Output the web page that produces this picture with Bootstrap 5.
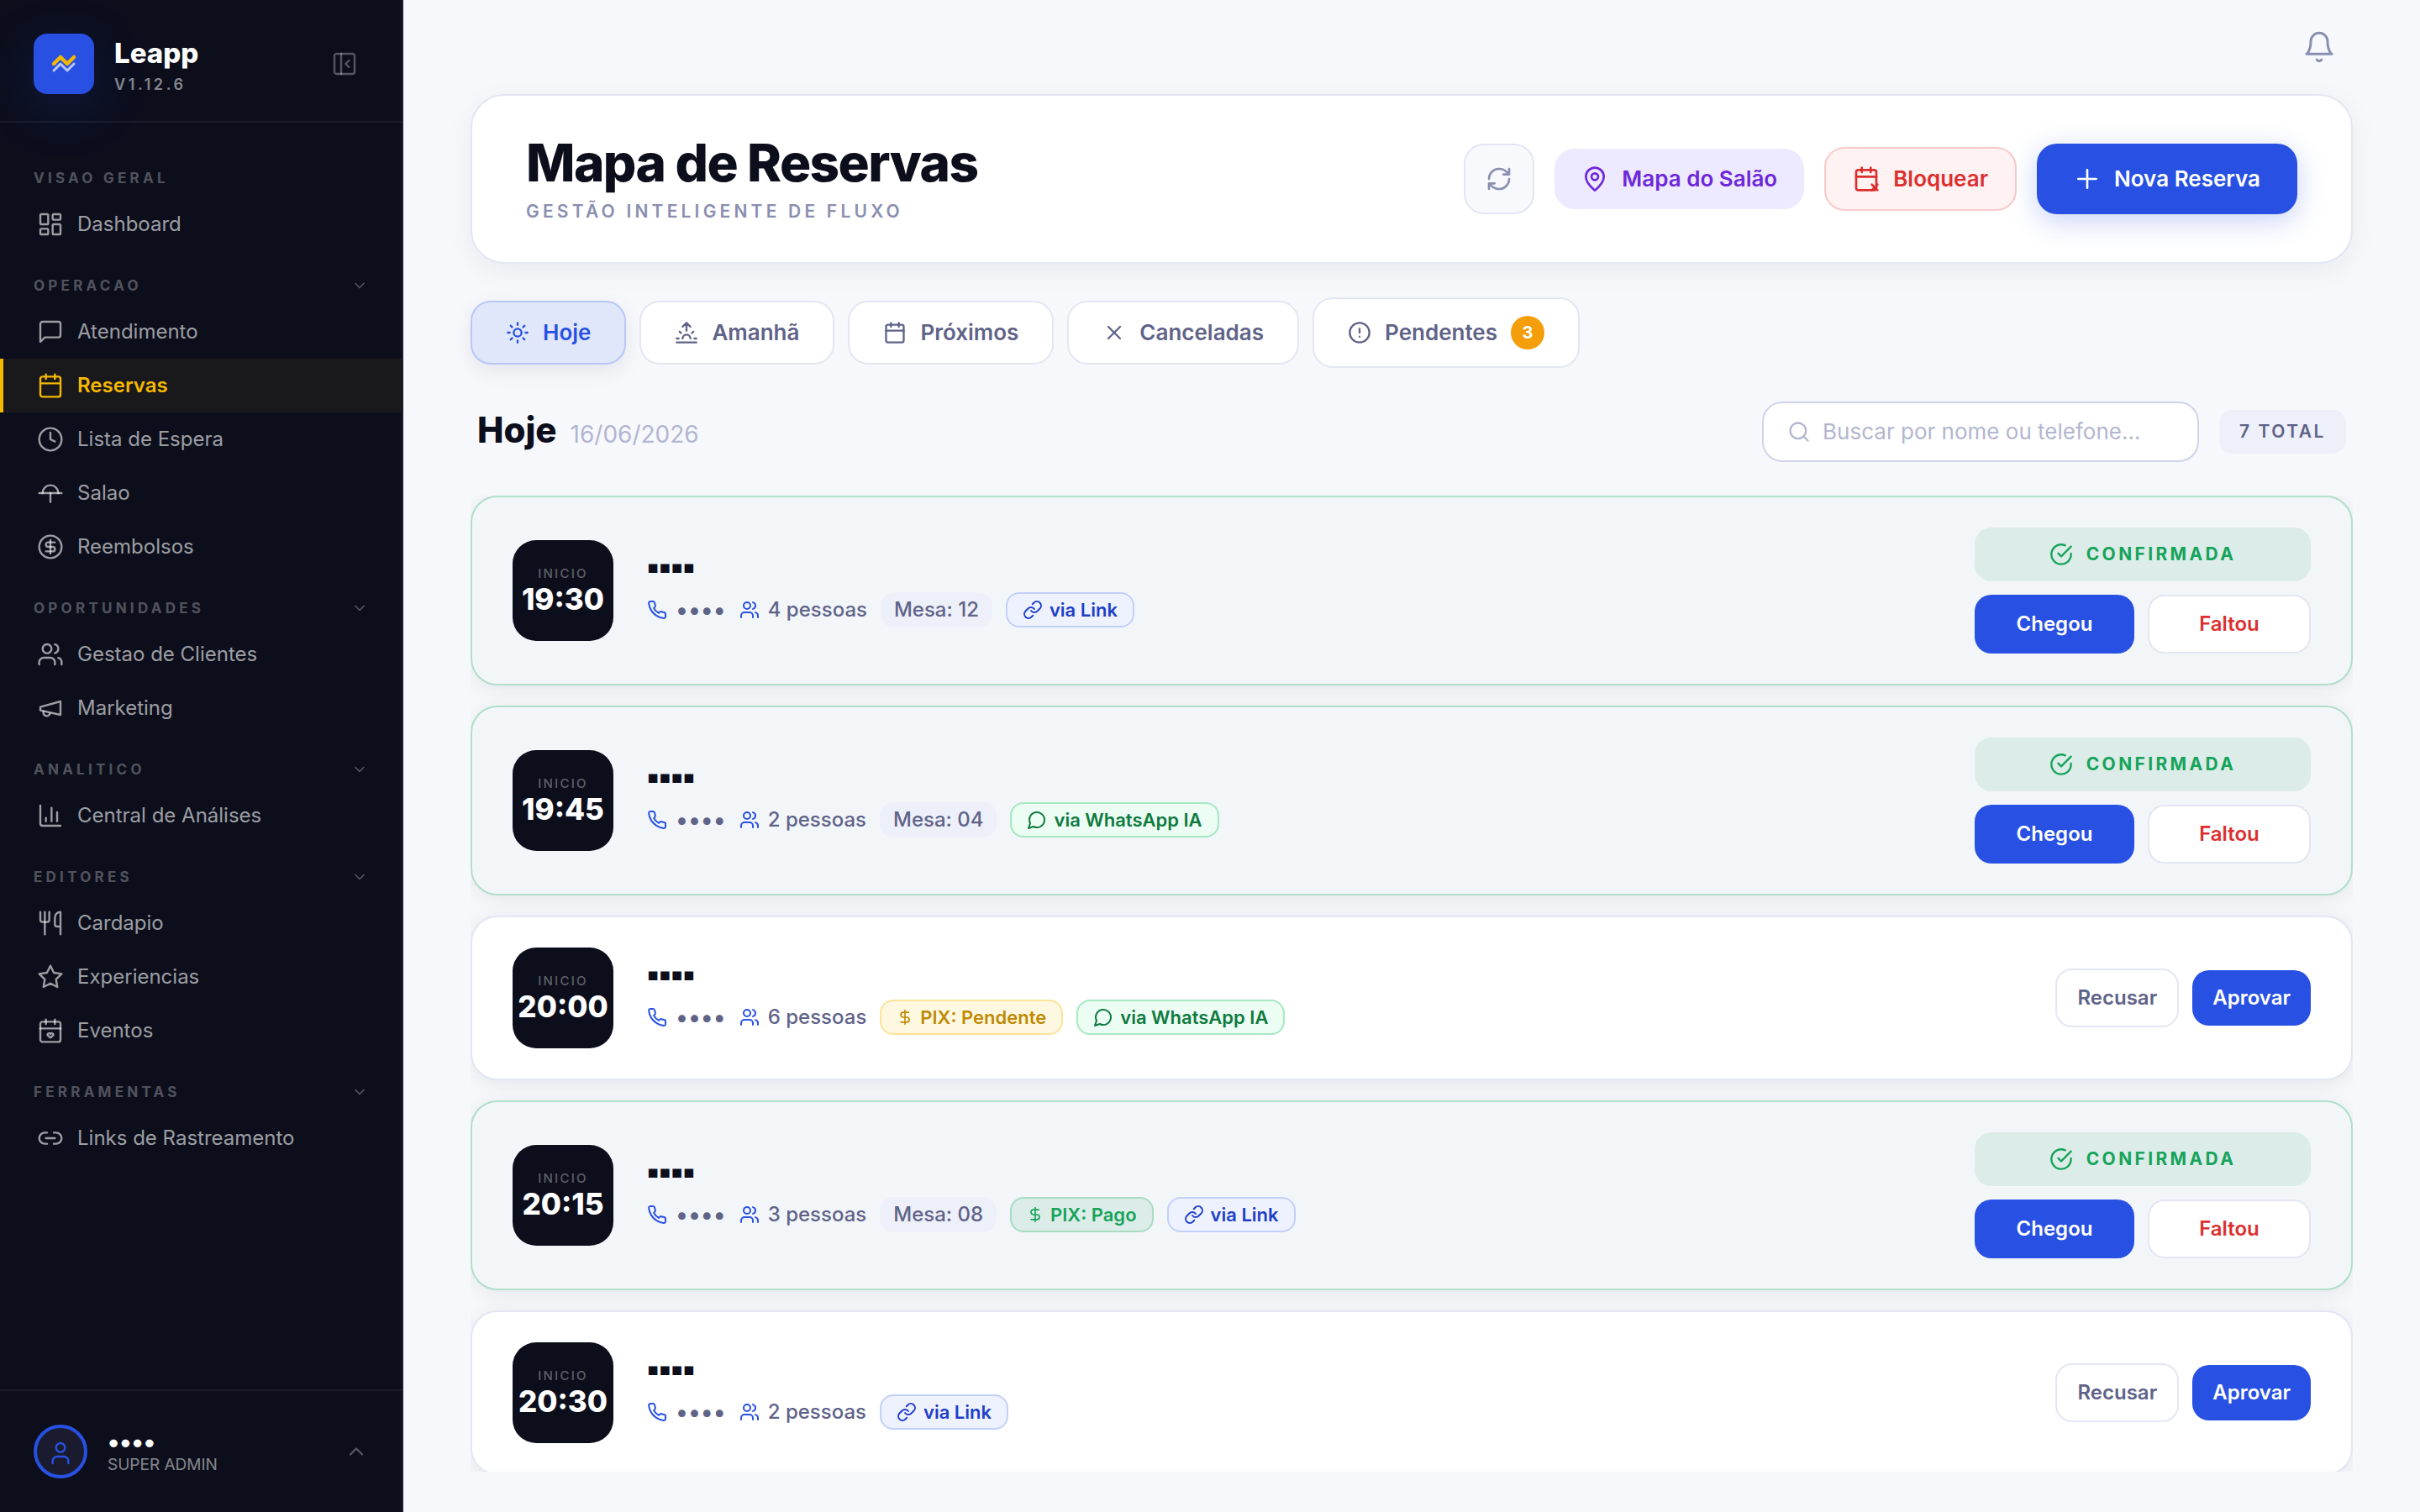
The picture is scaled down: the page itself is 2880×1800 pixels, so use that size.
<!DOCTYPE html>
<html lang="pt-BR">
<head>
<meta charset="utf-8">
<meta name="viewport" content="width=device-width, initial-scale=1">
<title>Leapp - Mapa de Reservas</title>
<link href="https://cdn.jsdelivr.net/npm/bootstrap@5.3.0/dist/css/bootstrap.min.css" rel="stylesheet">
<style>
:root{--brand:#2851e3;--ink:#0c0e1c;--line:#e4e6f3;--slate:#5f6388;--mute:#8a8fb0;--pale:#b2b6d0;--sun:#f5b800;--ok:#16a35a}
body{font-family:Inter,"Noto Sans",sans-serif;font-size:24px;line-height:32px;background:#f6f8fc;color:var(--ink)}
button,input{font-family:inherit}
a{text-decoration:none}
.ico{width:32px;height:32px;flex:none;fill:none;stroke:currentColor;stroke-width:2;stroke-linecap:round;stroke-linejoin:round}
.ico-xs{width:20px;height:20px}
.ico-sm{width:24px;height:24px}
.ico-md{width:28px;height:28px}
.ico-lg{width:40px;height:40px}
.thin{stroke-width:1.8}
/* sidebar */
.side{width:480px;flex:none;background:var(--ink);color:#fff;border-right:2px solid #1b1d2b}
.side-head{padding:40px 52px 32px 40px;border-bottom:2px solid #1b1d2b}
.logo{width:72px;height:72px;border-radius:16px;background:var(--brand);box-shadow:0 16px 64px rgba(40,81,227,.2)}
.brand-name{font-size:33px;font-weight:800;line-height:44px}
.version{font-size:18px;line-height:20px;font-weight:600;letter-spacing:.2em;color:rgba(255,255,255,.5);margin-top:6px}
.ghost{border:0;background:none;padding:0;color:rgba(255,255,255,.3)}
.ghost.bell{color:var(--mute)}
.side-nav{padding-top:25px}
.group-label{padding:28px 40px 10px;font-size:17px;line-height:26px;font-weight:700;letter-spacing:.25em;color:rgba(255,255,255,.3);width:100%;border:0;background:none;text-align:left}
.side-link{height:64px;padding-left:40px;border-left:4px solid transparent;color:rgba(255,255,255,.6);gap:16px}
.side-link.on{background:#19191c;border-color:var(--sun);color:var(--sun);font-weight:600}
.side-foot{padding:40px;border-top:2px solid #1b1d2b}
.face{width:64px;height:64px;border-radius:50%;border:4px solid var(--brand);background:#1a1b2e;color:var(--brand);padding-top:4px}
.user-name{font-size:30px;font-weight:700}
.role{font-size:19px;line-height:24px;color:rgba(255,255,255,.5)}
/* main */
.page{padding:0 80px 48px;min-width:0}
.topbar{height:112px;padding-right:20px}
.hero{padding:48px 64px;border:2px solid var(--line);border-radius:40px;background:#fff;box-shadow:0 8px 32px rgba(12,14,28,.06)}
.hero h1{font-size:62px;line-height:64px;font-weight:800;letter-spacing:-.025em;margin:0}
.kicker{font-size:21px;line-height:24px;font-weight:600;letter-spacing:.2em;color:var(--mute);margin-top:14px}
.act{display:inline-flex;align-items:center;gap:16px;border:0;border-radius:24px;font-size:26px;line-height:32px;font-weight:600;padding:20px 32px}
.act-map{background:#ede9fe;color:#6d28d9}
.act-block{background:#fef2f2;color:#dc2f2f;border:2px solid #f8caca}
.act-new{background:var(--brand);color:#fff;padding:26px 44px;box-shadow:0 8px 32px rgba(40,81,227,.25)}
.act-sync{background:#f7f9fd;border:2px solid var(--line);color:var(--mute);padding:24px}
.act-sync .ico{width:32px}
.tabs-row{gap:16px;margin-top:40px}
.pill{display:inline-flex;align-items:center;gap:16px;padding:20px 40px;border:2px solid var(--line);border-radius:24px;background:#fff;color:var(--slate);font-weight:600;font-size:26px;line-height:32px}
.pill.on{background:#e1e7fa;border-color:#b9c7f7;color:var(--brand);box-shadow:0 8px 24px rgba(12,14,28,.08)}
.count{width:40px;height:40px;border-radius:50%;background:#f59e0b;color:#fff;font-size:20px;font-weight:700}
.list-head{padding:0 8px;margin:40px 0}
.list-head h2{font-size:42px;line-height:48px;font-weight:800;margin:0}
.date{font-size:28px;color:var(--pale)}
.find{width:520px;height:72px;border:2px solid #d0d4ea;border-radius:24px;background:#fff;padding:0 28px;gap:14px;color:var(--pale)}
.find input{border:0;outline:0;background:none;font-size:26px;line-height:32px;padding:0;width:100%;color:var(--ink)}
.find input::placeholder{color:var(--pale);opacity:1}
.total{background:#eef0f9;border-radius:16px;padding:10px 24px;font-size:21px;line-height:32px;font-weight:600;letter-spacing:.12em;color:var(--slate)}
.bookings{overflow:hidden;gap:24px;min-height:0;flex:1 1 0}
.booking{flex:none;padding:36px 48px;border:2px solid var(--line);border-radius:32px;background:#fff;box-shadow:0 4px 24px rgba(12,14,28,.08)}
.booking.ok{background:#f2f6f9;border-color:#b0dfcb}
.slot{width:120px;height:120px;border-radius:28px;background:var(--ink);color:#fff;flex:none}
.slot small{font-size:15px;line-height:20px;font-weight:500;letter-spacing:.15em;color:rgba(255,255,255,.35)}
.slot b{font-size:35px;line-height:40px;font-weight:800}
.info{padding-left:40px}
.who{font-family:"DejaVu Sans",sans-serif;font-size:21px;line-height:32px;margin-bottom:14px}
.meta{gap:16px;color:var(--slate);font-weight:500}
.bit{display:inline-flex;align-items:center;gap:10px}
.bit .ico{color:var(--brand)}
.dots{font-size:28px}
.chip{display:inline-flex;align-items:center;gap:8px;height:42px;padding:0 18px;border:2px solid;border-radius:16px;font-size:22px;font-weight:600}
.chip-table{background:#eef0f9;border-color:#eef0f9;padding:0 14px;font-size:24px;font-weight:500}
.chip-link{background:#eef2ff;border-color:#c3cffb;color:#1f3fc8}
.chip-wa{background:#ecfdf3;border-color:#a5e8c2;color:#0f7a40}
.chip-wait{background:#fff8e1;border-color:#fde29a;color:#bf8a06}
.chip-paid{background:#dcece8;border-color:#a9dcc4;color:var(--ok)}
.status{width:400px;height:64px;border-radius:20px;background:#dcece8;color:var(--ok);gap:16px;font-size:21px;font-weight:700;letter-spacing:.16em}
.go{border:0;border-radius:20px;background:var(--brand);color:#fff;font-size:24px;line-height:30px;font-weight:600;padding:18px 24px}
.no{border:2px solid var(--line);border-radius:20px;background:#fff;color:var(--slate);font-size:24px;line-height:30px;font-weight:600;padding:18px 24px}
.no.miss{color:#dc2f2f}
.half{flex:1 1 0}
</style>
</head>
<body>
<svg class="d-none" aria-hidden="true">
<symbol id="i-dash" viewBox="0 0 24 24"><rect x="3" y="3" width="7" height="9" rx="1"/><rect x="14" y="3" width="7" height="5" rx="1"/><rect x="14" y="12" width="7" height="9" rx="1"/><rect x="3" y="16" width="7" height="5" rx="1"/></symbol>
<symbol id="i-msg" viewBox="0 0 24 24"><path d="M21 15a2 2 0 0 1-2 2H7l-4 4V5a2 2 0 0 1 2-2h14a2 2 0 0 1 2 2z"/></symbol>
<symbol id="i-cal" viewBox="0 0 24 24"><path d="M8 2v4M16 2v4M3 10h18"/><rect x="3" y="4" width="18" height="18" rx="2"/></symbol>
<symbol id="i-clock" viewBox="0 0 24 24"><circle cx="12" cy="12" r="10"/><path d="M12 6v6l4 2"/></symbol>
<symbol id="i-room" viewBox="0 0 24 24"><path d="M5 12a7 7 0 0 1 14 0"/><path d="M2 12h20"/><path d="M12 12v8"/></symbol>
<symbol id="i-coin" viewBox="0 0 24 24"><circle cx="12" cy="12" r="10"/><path d="M16 8h-6a2 2 0 1 0 0 4h4a2 2 0 1 1 0 4H8"/><path d="M12 18V6"/></symbol>
<symbol id="i-users" viewBox="0 0 24 24"><path d="M16 21v-2a4 4 0 0 0-4-4H6a4 4 0 0 0-4 4v2"/><circle cx="9" cy="7" r="4"/><path d="M22 21v-2a4 4 0 0 0-3-3.870M16 3.130a4 4 0 0 1 0 7.750"/></symbol>
<symbol id="i-mega" viewBox="0 0 24 24"><path d="m3 11 18-5v12L3 14v-3z"/><path d="M11.600 16.800a3 3 0 1 1-5.800-1.600"/></symbol>
<symbol id="i-chart" viewBox="0 0 24 24"><path d="M3 3v16a2 2 0 0 0 2 2h16M18 17V9M13 17V5M8 17v-3"/></symbol>
<symbol id="i-fork" viewBox="0 0 24 24"><path d="M3 2v7c0 1.100.9 2 2 2h4a2 2 0 0 0 2-2V2"/><path d="M7 2v20"/><path d="M21 15V2a5 5 0 0 0-5 5v6c0 1.100.9 2 2 2h3Zm0 0v7"/></symbol>
<symbol id="i-star" viewBox="0 0 24 24"><path d="m12 2 3.090 6.260L22 9.270l-5 4.870 1.180 6.880L12 17.770l-6.180 3.250L7 14.140 2 9.270l6.910-1.010z"/></symbol>
<symbol id="i-event" viewBox="0 0 24 24"><path d="M8 2v4M16 2v4"/><path d="M3 10h18"/><rect x="3" y="4" width="18" height="18" rx="2"/><path d="M12 18.200l-2.400-2a1.300 1.300 0 0 1 2.400-1.200 1.300 1.300 0 0 1 2.400 1.200z"/></symbol>
<symbol id="i-chain" viewBox="0 0 24 24"><path d="M9 17H7A5 5 0 0 1 7 7h2M15 7h2a5 5 0 1 1 0 10h-2M8 12h8"/></symbol>
<symbol id="i-panel" viewBox="0 0 24 24"><rect x="3" y="3" width="18" height="18" rx="2"/><path d="M9 3v18"/><path d="m16 15-3-3 3-3"/></symbol>
<symbol id="i-down" viewBox="0 0 24 24"><path d="m6 9 6 6 6-6"/></symbol>
<symbol id="i-up" viewBox="0 0 24 24"><path d="m18 15-6-6-6 6"/></symbol>
<symbol id="i-user" viewBox="0 0 24 24"><path d="M19 21v-2a4 4 0 0 0-4-4H9a4 4 0 0 0-4 4v2"/><circle cx="12" cy="7" r="4"/></symbol>
<symbol id="i-bell" viewBox="0 0 24 24"><path d="M6 8a6 6 0 0 1 12 0c0 7 3 9 3 9H3s3-2 3-9M10.300 21a1.940 1.940 0 0 0 3.400 0"/></symbol>
<symbol id="i-sync" viewBox="0 0 24 24"><path d="M3 12a9 9 0 0 1 9-9 9.750 9.750 0 0 1 6.740 2.740L21 8M21 3v5h-5M21 12a9 9 0 0 1-9 9 9.750 9.750 0 0 1-6.740-2.740L3 16M8 16H3v5"/></symbol>
<symbol id="i-pin" viewBox="0 0 24 24"><path d="M20 10c0 5-5.500 10.200-7.400 11.800a1 1 0 0 1-1.200 0C9.500 20.200 4 15 4 10a8 8 0 0 1 16 0"/><circle cx="12" cy="10" r="3"/></symbol>
<symbol id="i-calx" viewBox="0 0 24 24"><path d="M8 2v4M16 2v4M3 10h18"/><rect x="3" y="4" width="18" height="18" rx="2"/><path d="m17 17 5 5M22 17l-5 5"/></symbol>
<symbol id="i-plus" viewBox="0 0 24 24"><path d="M4 12h16M12 4v16"/></symbol>
<symbol id="i-sun" viewBox="0 0 24 24"><circle cx="12" cy="12" r="4"/><path d="M12 2v2M12 20v2M4.930 4.930l1.410 1.410M17.660 17.660l1.410 1.410M2 12h2M20 12h2M6.340 17.660l-1.410 1.410M19.070 4.930l-1.410 1.410"/></symbol>
<symbol id="i-rise" viewBox="0 0 24 24"><path d="M12 2v8M4.930 10.930l1.410 1.410M2 18h2M20 18h2M19.070 10.930l-1.410 1.410M22 22H2M8 6l4-4 4 4M16 18a4 4 0 0 0-8 0"/></symbol>
<symbol id="i-x" viewBox="0 0 24 24"><path d="M18 6 6 18M6 6l12 12"/></symbol>
<symbol id="i-alert" viewBox="0 0 24 24"><circle cx="12" cy="12" r="10"/><path d="M12 8v4M12 16h.010"/></symbol>
<symbol id="i-find" viewBox="0 0 24 24"><circle cx="11" cy="11" r="8"/><path d="m21 21-4.300-4.300"/></symbol>
<symbol id="i-phone" viewBox="0 0 24 24"><path d="M22 16.920v3a2 2 0 0 1-2.180 2 19.790 19.790 0 0 1-8.630-3.070 19.500 19.500 0 0 1-6-6 19.790 19.790 0 0 1-3.070-8.670A2 2 0 0 1 4.110 2h3a2 2 0 0 1 2 1.720 12.840 12.840 0 0 0 .7 2.810 2 2 0 0 1-.45 2.110L8.090 9.910a16 16 0 0 0 6 6l1.270-1.270a2 2 0 0 1 2.110-.45 12.840 12.840 0 0 0 2.810.7A2 2 0 0 1 22 16.920z"/></symbol>
<symbol id="i-link" viewBox="0 0 24 24"><path d="M10 13a5 5 0 0 0 7.540.54l3-3a5 5 0 0 0-7.070-7.070l-1.720 1.710"/><path d="M14 11a5 5 0 0 0-7.540-.54l-3 3a5 5 0 0 0 7.070 7.070l1.710-1.710"/></symbol>
<symbol id="i-wa" viewBox="0 0 24 24"><path d="M7.900 20A9 9 0 1 0 4 16.100L2 22Z"/></symbol>
<symbol id="i-cash" viewBox="0 0 24 24"><path d="M12 2v20M17 5H9.500a3.500 3.500 0 0 0 0 7h5a3.500 3.500 0 0 1 0 7H6"/></symbol>
<symbol id="i-check" viewBox="0 0 24 24"><path d="M22 11.080V12a10 10 0 1 1-5.930-9.140"/><path d="m9 11 3 3L22 4"/></symbol>
</svg>

<div class="d-flex vh-100 overflow-hidden">
<aside class="side d-flex flex-column">
  <div class="side-head d-flex align-items-center">
    <div class="logo d-flex align-items-center justify-content-center flex-shrink-0">
      <svg width="32" height="24" viewBox="0 0 32 24" fill="none" stroke-linecap="round" stroke-linejoin="round"><path d="M4 20l8-8 8 8 8-8" stroke="#b9c6f8" stroke-width="3"/><path d="M4 12l8-8 8 8 8-8" stroke="#f5b800" stroke-width="4.500"/></svg>
    </div>
    <div class="ms-4 flex-grow-1">
      <div class="brand-name">Leapp</div>
      <div class="version">V1.12.6</div>
    </div>
    <button class="ghost d-flex" type="button" aria-label="Recolher menu"><svg class="ico thin"><use href="#i-panel"/></svg></button>
  </div>
  <nav class="side-nav flex-grow-1">
    <div class="group-label">VISAO GERAL</div>
    <a class="side-link d-flex align-items-center" href="#"><svg class="ico thin"><use href="#i-dash"/></svg>Dashboard</a>
    <button class="group-label d-flex align-items-center justify-content-between" type="button">OPERACAO<svg class="ico ico-xs"><use href="#i-down"/></svg></button>
    <a class="side-link d-flex align-items-center" href="#"><svg class="ico thin"><use href="#i-msg"/></svg>Atendimento</a>
    <a class="side-link on d-flex align-items-center" href="#"><svg class="ico thin"><use href="#i-cal"/></svg>Reservas</a>
    <a class="side-link d-flex align-items-center" href="#"><svg class="ico thin"><use href="#i-clock"/></svg>Lista de Espera</a>
    <a class="side-link d-flex align-items-center" href="#"><svg class="ico thin"><use href="#i-room"/></svg>Salao</a>
    <a class="side-link d-flex align-items-center" href="#"><svg class="ico thin"><use href="#i-coin"/></svg>Reembolsos</a>
    <button class="group-label d-flex align-items-center justify-content-between" type="button">OPORTUNIDADES<svg class="ico ico-xs"><use href="#i-down"/></svg></button>
    <a class="side-link d-flex align-items-center" href="#"><svg class="ico thin"><use href="#i-users"/></svg>Gestao de Clientes</a>
    <a class="side-link d-flex align-items-center" href="#"><svg class="ico thin"><use href="#i-mega"/></svg>Marketing</a>
    <button class="group-label d-flex align-items-center justify-content-between" type="button">ANALITICO<svg class="ico ico-xs"><use href="#i-down"/></svg></button>
    <a class="side-link d-flex align-items-center" href="#"><svg class="ico thin"><use href="#i-chart"/></svg>Central de Análises</a>
    <button class="group-label d-flex align-items-center justify-content-between" type="button">EDITORES<svg class="ico ico-xs"><use href="#i-down"/></svg></button>
    <a class="side-link d-flex align-items-center" href="#"><svg class="ico thin"><use href="#i-fork"/></svg>Cardapio</a>
    <a class="side-link d-flex align-items-center" href="#"><svg class="ico thin"><use href="#i-star"/></svg>Experiencias</a>
    <a class="side-link d-flex align-items-center" href="#"><svg class="ico thin"><use href="#i-event"/></svg>Eventos</a>
    <button class="group-label d-flex align-items-center justify-content-between" type="button">FERRAMENTAS<svg class="ico ico-xs"><use href="#i-down"/></svg></button>
    <a class="side-link d-flex align-items-center" href="#"><svg class="ico thin"><use href="#i-chain"/></svg>Links de Rastreamento</a>
  </nav>
  <div class="side-foot d-flex align-items-center">
    <div class="face d-flex align-items-center justify-content-center flex-shrink-0"><svg class="ico thin"><use href="#i-user"/></svg></div>
    <div class="ms-4 flex-grow-1">
      <div class="user-name">••••</div>
      <div class="role">SUPER ADMIN</div>
    </div>
    <button class="ghost d-flex" type="button" aria-label="Abrir conta"><svg class="ico ico-md"><use href="#i-up"/></svg></button>
  </div>
</aside>

<main class="page d-flex flex-column flex-grow-1">
  <div class="topbar d-flex align-items-center justify-content-end"><button class="ghost bell d-flex" type="button" aria-label="Notificações"><svg class="ico ico-lg thin"><use href="#i-bell"/></svg></button></div>
  <header class="hero d-flex align-items-center justify-content-between">
    <div>
      <h1>Mapa de Reservas</h1>
      <div class="kicker">GESTÃO INTELIGENTE DE FLUXO</div>
    </div>
    <div class="d-flex align-items-center gap-4">
      <button class="act act-sync" type="button" aria-label="Atualizar"><svg class="ico"><use href="#i-sync"/></svg></button>
      <button class="act act-map" type="button"><svg class="ico"><use href="#i-pin"/></svg>Mapa do Salão</button>
      <button class="act act-block" type="button"><svg class="ico"><use href="#i-calx"/></svg>Bloquear</button>
      <button class="act act-new" type="button"><svg class="ico"><use href="#i-plus"/></svg>Nova Reserva</button>
    </div>
  </header>
  <div class="tabs-row d-flex align-items-center">
    <button class="pill on" type="button"><svg class="ico ico-md"><use href="#i-sun"/></svg>Hoje</button>
    <button class="pill" type="button"><svg class="ico ico-md"><use href="#i-rise"/></svg>Amanhã</button>
    <button class="pill" type="button"><svg class="ico ico-md"><use href="#i-cal"/></svg>Próximos</button>
    <button class="pill" type="button"><svg class="ico ico-md"><use href="#i-x"/></svg>Canceladas</button>
    <button class="pill" type="button"><svg class="ico ico-md"><use href="#i-alert"/></svg>Pendentes<span class="count d-flex align-items-center justify-content-center">3</span></button>
  </div>
  <div class="list-head d-flex align-items-center justify-content-between">
    <div class="d-flex align-items-baseline gap-3 pb-1"><h2>Hoje</h2><span class="date">16/06/2026</span></div>
    <div class="d-flex align-items-center gap-4">
      <label class="find d-flex align-items-center"><svg class="ico ico-md"><use href="#i-find"/></svg><input type="text" placeholder="Buscar por nome ou telefone..." aria-label="Buscar por nome ou telefone"></label>
      <span class="total">7 TOTAL</span>
    </div>
  </div>
  <section class="bookings d-flex flex-column">
    <article class="booking ok d-flex align-items-center">
      <div class="slot d-flex flex-column align-items-center justify-content-center"><small>INICIO</small><b>19:30</b></div>
      <div class="info flex-grow-1">
        <div class="who">▪▪▪▪</div>
        <div class="meta d-flex align-items-center"><span class="bit"><svg class="ico ico-sm"><use href="#i-phone"/></svg><span class="dots">••••</span></span><span class="bit"><svg class="ico ico-sm"><use href="#i-users"/></svg>4 pessoas</span><span class="chip chip-table">Mesa: 12</span><span class="chip chip-link"><svg class="ico ico-sm"><use href="#i-link"/></svg>via Link</span></div>
      </div>
      <div class="d-flex flex-column gap-3">
        <div class="status d-flex align-items-center justify-content-center"><svg class="ico ico-md"><use href="#i-check"/></svg>CONFIRMADA</div>
        <div class="d-flex gap-3"><button class="go half" type="button">Chegou</button><button class="no miss half" type="button">Faltou</button></div>
      </div>
    </article>
    <article class="booking ok d-flex align-items-center">
      <div class="slot d-flex flex-column align-items-center justify-content-center"><small>INICIO</small><b>19:45</b></div>
      <div class="info flex-grow-1">
        <div class="who">▪▪▪▪</div>
        <div class="meta d-flex align-items-center"><span class="bit"><svg class="ico ico-sm"><use href="#i-phone"/></svg><span class="dots">••••</span></span><span class="bit"><svg class="ico ico-sm"><use href="#i-users"/></svg>2 pessoas</span><span class="chip chip-table">Mesa: 04</span><span class="chip chip-wa"><svg class="ico ico-sm"><use href="#i-wa"/></svg>via WhatsApp IA</span></div>
      </div>
      <div class="d-flex flex-column gap-3">
        <div class="status d-flex align-items-center justify-content-center"><svg class="ico ico-md"><use href="#i-check"/></svg>CONFIRMADA</div>
        <div class="d-flex gap-3"><button class="go half" type="button">Chegou</button><button class="no miss half" type="button">Faltou</button></div>
      </div>
    </article>
    <article class="booking d-flex align-items-center">
      <div class="slot d-flex flex-column align-items-center justify-content-center"><small>INICIO</small><b>20:00</b></div>
      <div class="info flex-grow-1">
        <div class="who">▪▪▪▪</div>
        <div class="meta d-flex align-items-center"><span class="bit"><svg class="ico ico-sm"><use href="#i-phone"/></svg><span class="dots">••••</span></span><span class="bit"><svg class="ico ico-sm"><use href="#i-users"/></svg>6 pessoas</span><span class="chip chip-wait"><svg class="ico ico-xs"><use href="#i-cash"/></svg>PIX: Pendente</span><span class="chip chip-wa"><svg class="ico ico-sm"><use href="#i-wa"/></svg>via WhatsApp IA</span></div>
      </div>
      <div class="d-flex align-items-center gap-3"><button class="no" type="button">Recusar</button><button class="go" type="button">Aprovar</button></div>
    </article>
    <article class="booking ok d-flex align-items-center">
      <div class="slot d-flex flex-column align-items-center justify-content-center"><small>INICIO</small><b>20:15</b></div>
      <div class="info flex-grow-1">
        <div class="who">▪▪▪▪</div>
        <div class="meta d-flex align-items-center"><span class="bit"><svg class="ico ico-sm"><use href="#i-phone"/></svg><span class="dots">••••</span></span><span class="bit"><svg class="ico ico-sm"><use href="#i-users"/></svg>3 pessoas</span><span class="chip chip-table">Mesa: 08</span><span class="chip chip-paid"><svg class="ico ico-xs"><use href="#i-cash"/></svg>PIX: Pago</span><span class="chip chip-link"><svg class="ico ico-sm"><use href="#i-link"/></svg>via Link</span></div>
      </div>
      <div class="d-flex flex-column gap-3">
        <div class="status d-flex align-items-center justify-content-center"><svg class="ico ico-md"><use href="#i-check"/></svg>CONFIRMADA</div>
        <div class="d-flex gap-3"><button class="go half" type="button">Chegou</button><button class="no miss half" type="button">Faltou</button></div>
      </div>
    </article>
    <article class="booking d-flex align-items-center">
      <div class="slot d-flex flex-column align-items-center justify-content-center"><small>INICIO</small><b>20:30</b></div>
      <div class="info flex-grow-1">
        <div class="who">▪▪▪▪</div>
        <div class="meta d-flex align-items-center"><span class="bit"><svg class="ico ico-sm"><use href="#i-phone"/></svg><span class="dots">••••</span></span><span class="bit"><svg class="ico ico-sm"><use href="#i-users"/></svg>2 pessoas</span><span class="chip chip-link"><svg class="ico ico-sm"><use href="#i-link"/></svg>via Link</span></div>
      </div>
      <div class="d-flex align-items-center gap-3"><button class="no" type="button">Recusar</button><button class="go" type="button">Aprovar</button></div>
    </article>
  </section>
</main>
</div>
<script src="https://cdn.jsdelivr.net/npm/bootstrap@5.3.0/dist/js/bootstrap.bundle.min.js"></script>
</body>
</html>
